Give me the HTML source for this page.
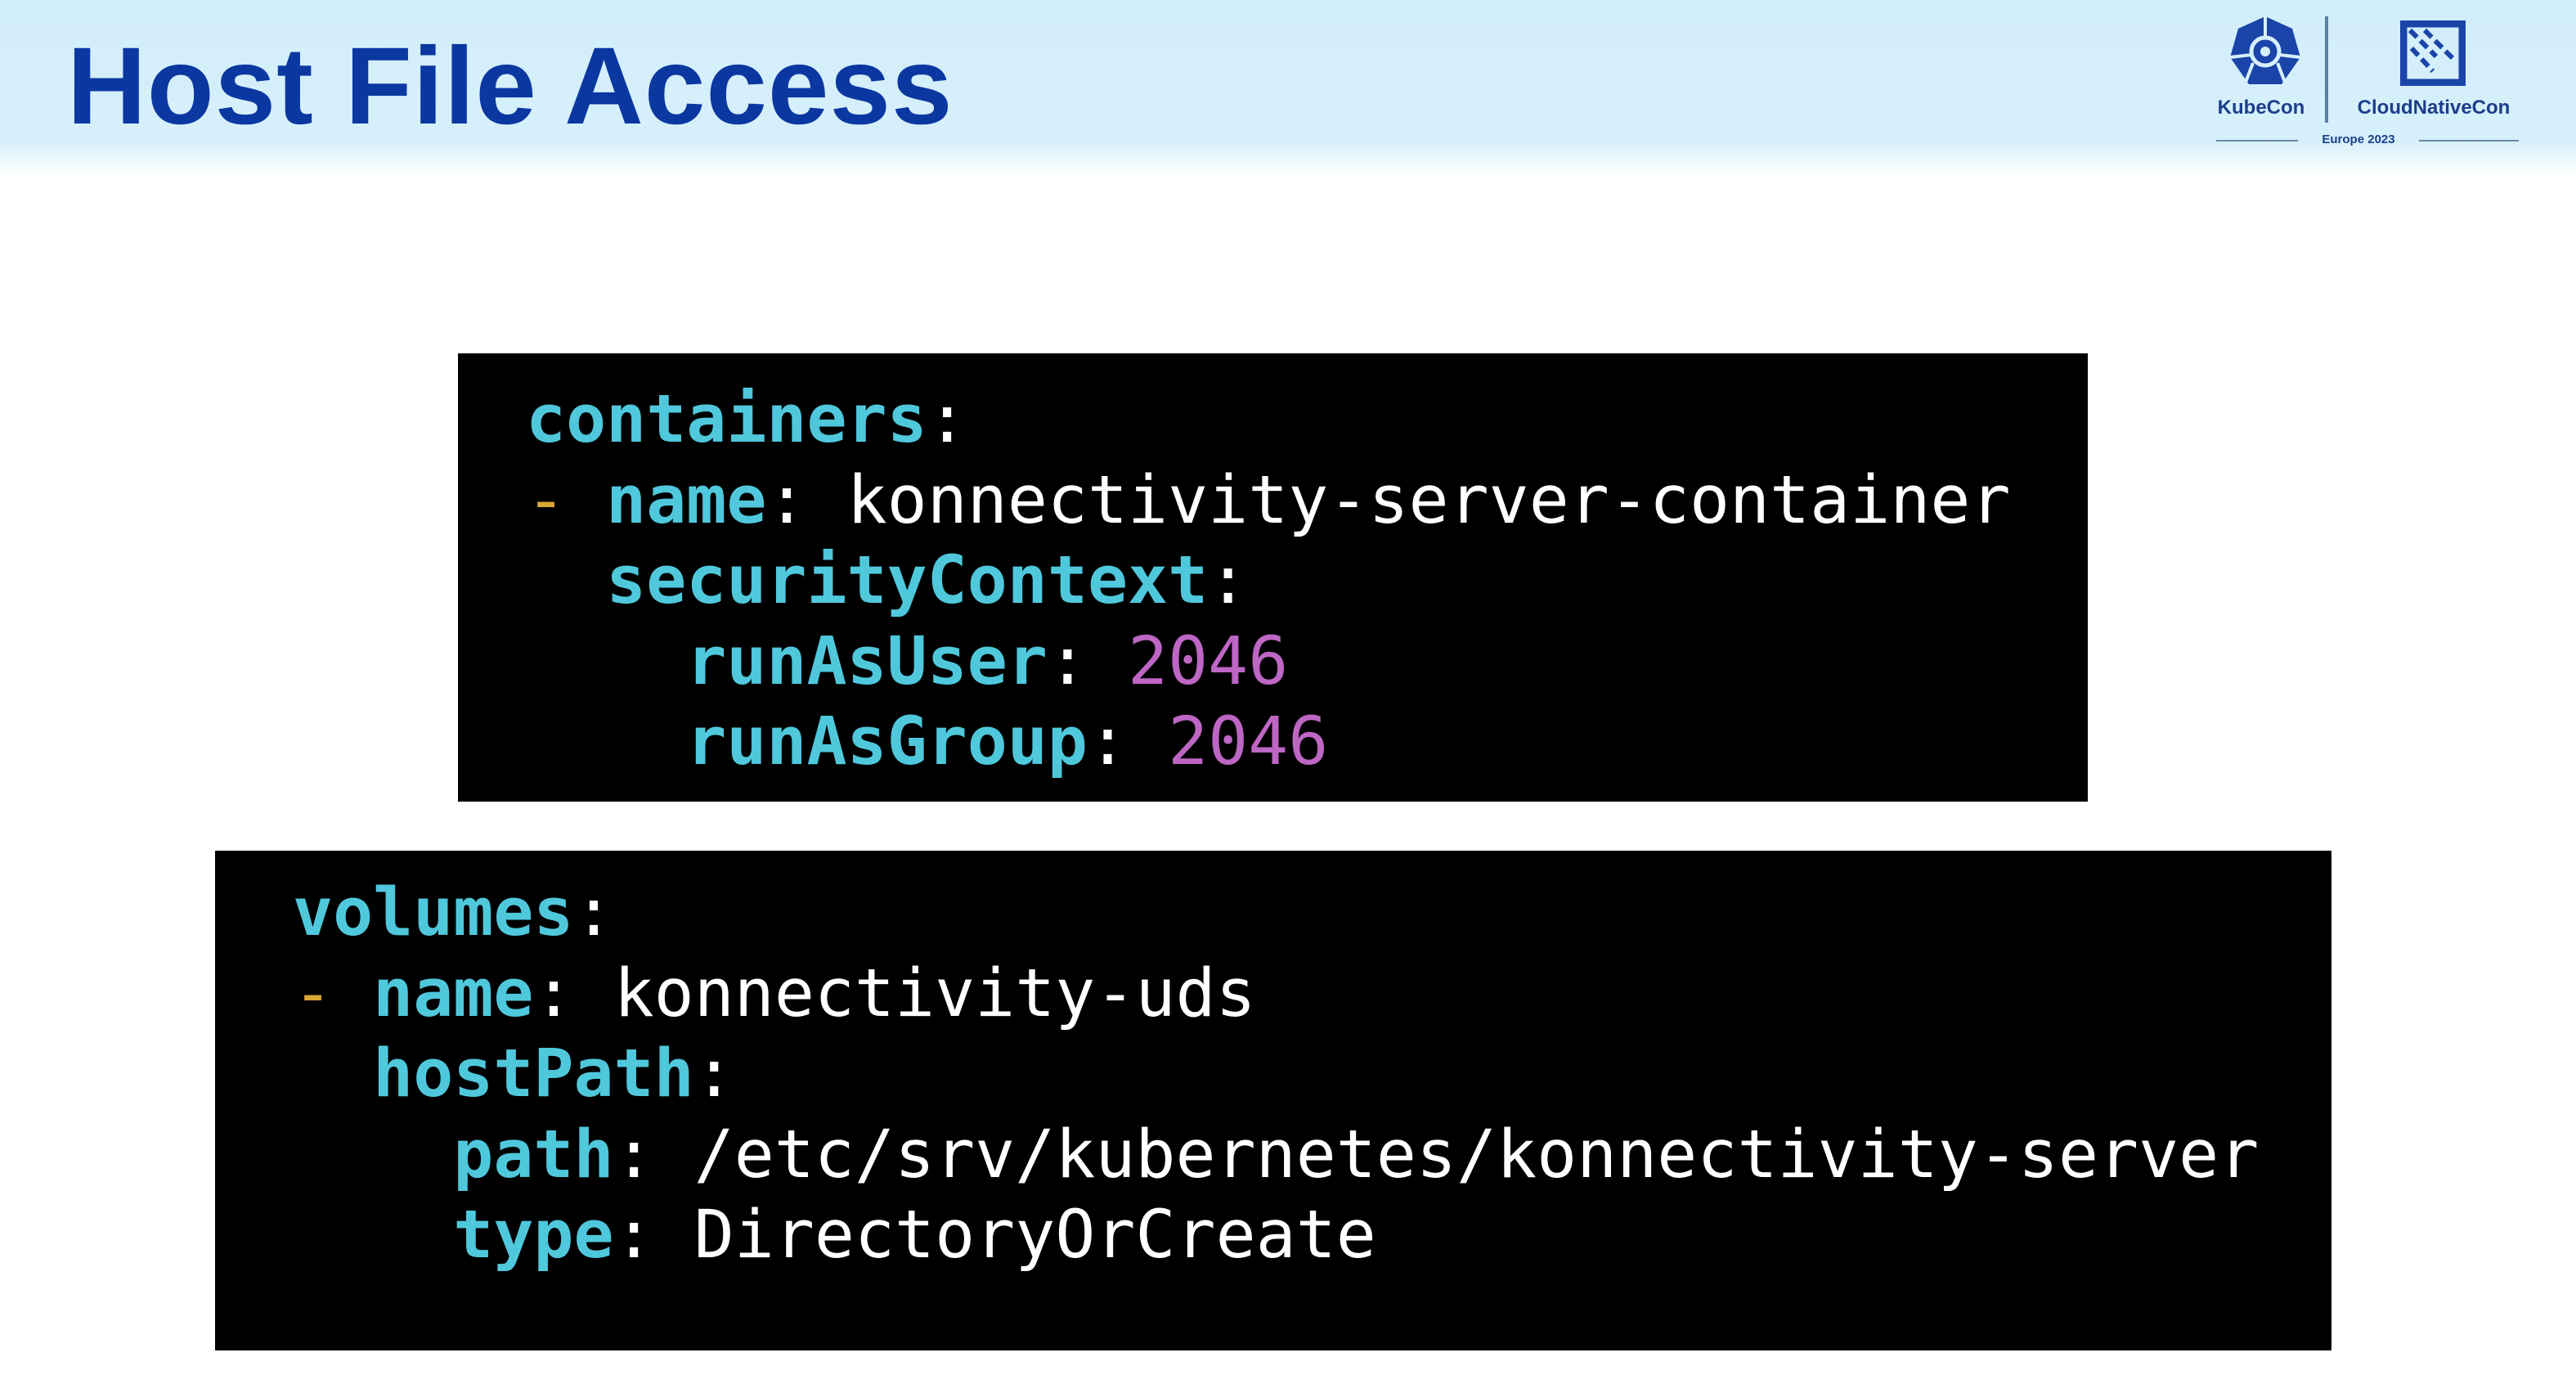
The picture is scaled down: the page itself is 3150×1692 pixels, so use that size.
<!DOCTYPE html>
<html><head><meta charset="utf-8"><style>
html,body{margin:0;padding:0}
body{width:3150px;height:1692px;position:relative;overflow:hidden;background:#fff;font-family:"Liberation Sans",sans-serif}
.hdr{position:absolute;left:0;top:0;width:3150px;height:215px;background:linear-gradient(180deg,#d2eefa 0%,#d6f0fb 80%,#ffffff 100%)}
.title{position:absolute;left:82px;top:26px;font-size:134px;font-weight:bold;color:#0b37a1;letter-spacing:1px;line-height:160px}
.code{position:absolute;background:#000;font-family:"DejaVu Sans Mono","Liberation Mono",monospace;font-size:81.5px;line-height:98.5px;white-space:pre;color:#fff}
.k{color:#4fc8dc;font-weight:bold}
.n{color:#bd66c4}
.d{color:#d9a534}
.c1{left:560px;top:432px;width:1993px;height:548px;box-sizing:border-box;padding:32px 0 0 83px}
.c2{left:263px;top:1040px;width:2588px;height:611px;box-sizing:border-box;padding:27px 0 0 95px}
.lt{position:absolute;font-weight:bold;color:#1c3e8c;text-align:center}
</style></head><body>
<div class="hdr"></div>
<div class="title">Host File Access</div>

<svg style="position:absolute;left:2715px;top:15px" width="110" height="100" viewBox="0 0 110 100">
<polygon points="55,5 88,20 98,55 75,88 35,88 12,55 22,20" fill="#1a44a8"/>
<circle cx="55" cy="48" r="17" fill="none" stroke="#d6f0fb" stroke-width="5"/>
<circle cx="55" cy="48" r="6" fill="#d6f0fb"/>
<path d="M55 5 V30 M12 55 L38 52 M98 55 L72 52 M40 62 L30 88 M70 62 L80 88" stroke="#d6f0fb" stroke-width="4"/>
</svg>
<div style="position:absolute;left:2843px;top:20px;width:4px;height:130px;background:#5a7fa6"></div>
<svg style="position:absolute;left:2935px;top:25px" width="80" height="80" viewBox="0 0 80 80">
<rect x="4" y="4" width="72" height="72" fill="none" stroke="#1a44a8" stroke-width="9"/>
<path d="M12 12 L44 44 M30 12 L66 48 M14 34 L40 62" stroke="#1a44a8" stroke-width="6" stroke-dasharray="12 6"/>
</svg>
<div class="lt" style="left:2700px;top:118px;width:130px;font-size:24px">KubeCon</div>
<div class="lt" style="left:2860px;top:118px;width:232px;font-size:24px">CloudNativeCon</div>
<div style="position:absolute;left:2710px;top:171px;width:100px;height:2px;background:#6c8aa6"></div>
<div style="position:absolute;left:2958px;top:171px;width:122px;height:2px;background:#6c8aa6"></div>
<div class="lt" style="left:2820px;top:162px;width:128px;font-size:15px">Europe 2023</div>

<div class="code c1"><span class="k">containers</span>:
<span class="d">-</span> <span class="k">name</span>: konnectivity-server-container
  <span class="k">securityContext</span>:
    <span class="k">runAsUser</span>: <span class="n">2046</span>
    <span class="k">runAsGroup</span>: <span class="n">2046</span></div>

<div class="code c2"><span class="k">volumes</span>:
<span class="d">-</span> <span class="k">name</span>: konnectivity-uds
  <span class="k">hostPath</span>:
    <span class="k">path</span>: /etc/srv/kubernetes/konnectivity-server
    <span class="k">type</span>: DirectoryOrCreate</div>
</body></html>
